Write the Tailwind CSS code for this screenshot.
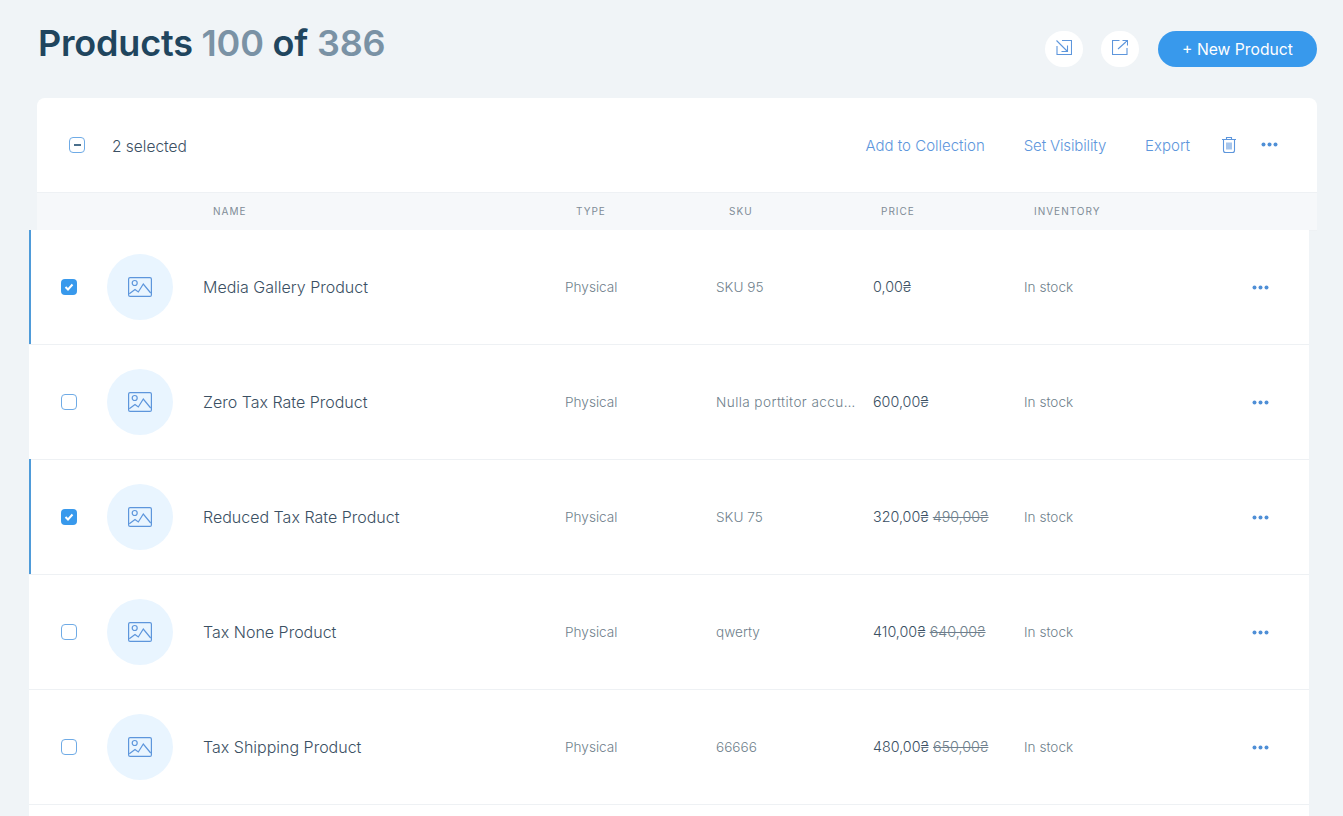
<!DOCTYPE html>
<html>
<head>
<meta charset="utf-8">
<script src="https://cdn.jsdelivr.net/npm/@tailwindcss/browser@4"></script>
</head>
<body class="bg-[#f0f4f7] h-[816px] overflow-hidden font-['Inter',sans-serif]">
<div class="h-[816px] overflow-hidden">
  <header class="flex justify-between h-[98px] pl-[38px] pr-[26px]">
    <h1 class="mt-[21px] h-[44px] text-[36px] leading-[44px] font-semibold text-[#20455e] tracking-[-0.2px]">Products <span class="text-[#7a92a5]">100</span> of <span class="text-[#7a92a5]">386</span></h1>
    <div class="flex items-start gap-[18px] pt-[31px]">
      <button class="w-[38px] h-[36px] rounded-full bg-white flex items-center justify-center">
        <svg class="mb-[3px]" width="16" height="15" viewBox="0 0 16 15" fill="none" stroke="#5d96dc" stroke-width="1.100"><path d="M1 6v8.500h14.500V.5H6"/><path d="M.5.500L11.500 11.500M11.500 5.500v6h-6"/></svg>
      </button>
      <button class="w-[38px] h-[36px] rounded-full bg-white flex items-center justify-center">
        <svg class="mb-[3px]" width="16" height="15" viewBox="0 0 16 15" fill="none" stroke="#5d96dc" stroke-width="1.100"><path d="M7.500 .5h-7v14h14.500V8"/><path d="M6 9L15.500 .5M10.500 .5h5V5.500"/></svg>
      </button>
      <button class="ml-[1px] w-[159px] h-[36px] rounded-full bg-[#3899ec] text-white text-[15.700px] leading-[37px] text-center">+ New Product</button>
    </div>
  </header>

  <section class="ml-[37px] w-[1280px] bg-white rounded-t-[8px]">
    <div class="h-[95px] flex items-center pl-[32px] pr-[39px] border-b border-[#eef1f4]">
      <span class="w-[16px] h-[16px] rounded-[4px] border border-[#6fabe6] flex items-center justify-center"><span class="w-[7px] h-[2px] bg-[#4a6f8c]"></span></span>
      <span class="ml-[27px] pt-[4px] text-[15.500px] font-light text-[#3b5063]">2 selected</span>
      <div class="ml-auto flex items-center text-[15px] text-[#5d96dc] font-light">
        <span class="pt-[3px]">Add to Collection</span>
        <span class="pt-[3px] ml-[39px] tracking-[-0.15px]">Set Visibility</span>
        <span class="pt-[3px] ml-[39px]">Export</span>
        <svg class="ml-[31px]" width="16" height="18" viewBox="0 0 16 18" fill="none" stroke="#5d96dc" stroke-width="1.100"><path d="M1 3.500h14M5.500 3.500v-2h5v2M2.500 3.500v11a2 2 0 0 0 2 2h7a2 2 0 0 0 2-2v-11M6 6.500v7M8 6.500v7M10 6.500v7"/></svg>
        <svg class="ml-[24px] mb-[2px]" width="17" height="5" viewBox="0 0 17 5" fill="#4f8fd6"><circle cx="2.500" cy="2.500" r="2"/><circle cx="8.500" cy="2.500" r="2"/><circle cx="14.500" cy="2.500" r="2"/></svg>
      </div>
    </div>
    <div class="h-[38px] bg-[#f6f8fa] flex items-center text-[10px] tracking-[1px] text-[#7f8c97] uppercase border-b border-[#eef1f4]">
      <span class="ml-[176px] w-[363px]">Name</span>
      <span class="w-[153px]">Type</span>
      <span class="w-[152px]">SKU</span>
      <span class="w-[153px]">Price</span>
      <span>Inventory</span>
    </div>
  </section>

  <main class="ml-[29px] w-[1280px] bg-white">
    <div class="h-[115px] flex items-center border-b border-[#eef1f4] relative -mt-px">
      <span class="absolute left-0 top-0 bottom-0 w-[2px] bg-[#4f9bd9]"></span>
      <span class="ml-[32px] w-[16px] h-[16px] rounded-[4px] bg-[#3899ec] flex items-center justify-center"><svg width="10" height="8" viewBox="0 0 10 8" fill="none" stroke="#fff" stroke-width="2"><path d="M1.500 4l2.500 2.500 4.500-5"/></svg></span>
      <span class="ml-[30px] w-[66px] h-[66px] rounded-full bg-[#e9f5ff] flex items-center justify-center"><svg width="24" height="20" viewBox="0 0 24 20" fill="none" stroke="#5d96dc" stroke-width="1.200"><rect x="0.600" y="0.600" width="22.800" height="18.800" rx="1.500"/><circle cx="6.700" cy="6" r="2.500"/><path d="M1.300 16.700L7 12.500l3.300 2.500 5-8 7.400 9"/></svg></span>
      <span class="ml-[30px] w-[362px] text-[16px] font-light text-[#3b5063]">Media Gallery Product</span>
      <span class="w-[151px] text-[13.600px] font-light text-[#6f7f8c]">Physical</span>
      <span class="w-[157px] text-[13.600px] font-light text-[#6f7f8c]"><span class="block w-[141px] truncate">SKU 95</span></span>
      <span class="w-[151px] text-[14.300px] font-light text-[#3b5063]">0,00₴</span>
      <span class="w-[228px] text-[13.600px] font-light text-[#6f7f8c]">In stock</span>
      <svg width="17" height="5" viewBox="0 0 17 5" fill="#4f8fd6"><circle cx="2.500" cy="2.500" r="2"/><circle cx="8.500" cy="2.500" r="2"/><circle cx="14.500" cy="2.500" r="2"/></svg>
    </div>
    <div class="h-[115px] flex items-center border-b border-[#eef1f4] relative">
      <span class="ml-[32px] w-[16px] h-[16px] rounded-[4px] border border-[#6fabe6]"></span>
      <span class="ml-[30px] w-[66px] h-[66px] rounded-full bg-[#e9f5ff] flex items-center justify-center"><svg width="24" height="20" viewBox="0 0 24 20" fill="none" stroke="#5d96dc" stroke-width="1.200"><rect x="0.600" y="0.600" width="22.800" height="18.800" rx="1.500"/><circle cx="6.700" cy="6" r="2.500"/><path d="M1.300 16.700L7 12.500l3.300 2.500 5-8 7.400 9"/></svg></span>
      <span class="ml-[30px] w-[362px] text-[16px] font-light text-[#3b5063]">Zero Tax Rate Product</span>
      <span class="w-[151px] text-[13.600px] font-light text-[#6f7f8c]">Physical</span>
      <span class="w-[157px] text-[13.600px] font-light text-[#6f7f8c]"><span class="block w-[141px] truncate tracking-[0.4px]">Nulla porttitor accumsan</span></span>
      <span class="w-[151px] text-[14.300px] font-light text-[#3b5063]">600,00₴</span>
      <span class="w-[228px] text-[13.600px] font-light text-[#6f7f8c]">In stock</span>
      <svg width="17" height="5" viewBox="0 0 17 5" fill="#4f8fd6"><circle cx="2.500" cy="2.500" r="2"/><circle cx="8.500" cy="2.500" r="2"/><circle cx="14.500" cy="2.500" r="2"/></svg>
    </div>
    <div class="h-[115px] flex items-center border-b border-[#eef1f4] relative">
      <span class="absolute left-0 -top-px bottom-0 w-[2px] bg-[#4f9bd9]"></span>
      <span class="ml-[32px] w-[16px] h-[16px] rounded-[4px] bg-[#3899ec] flex items-center justify-center"><svg width="10" height="8" viewBox="0 0 10 8" fill="none" stroke="#fff" stroke-width="2"><path d="M1.500 4l2.500 2.500 4.500-5"/></svg></span>
      <span class="ml-[30px] w-[66px] h-[66px] rounded-full bg-[#e9f5ff] flex items-center justify-center"><svg width="24" height="20" viewBox="0 0 24 20" fill="none" stroke="#5d96dc" stroke-width="1.200"><rect x="0.600" y="0.600" width="22.800" height="18.800" rx="1.500"/><circle cx="6.700" cy="6" r="2.500"/><path d="M1.300 16.700L7 12.500l3.300 2.500 5-8 7.400 9"/></svg></span>
      <span class="ml-[30px] w-[362px] text-[16px] font-light text-[#3b5063]">Reduced Tax Rate Product</span>
      <span class="w-[151px] text-[13.600px] font-light text-[#6f7f8c]">Physical</span>
      <span class="w-[157px] text-[13.600px] font-light text-[#6f7f8c]"><span class="block w-[141px] truncate">SKU 75</span></span>
      <span class="w-[151px] text-[14.300px] font-light text-[#3b5063]">320,00₴ <s class="text-[#6f7f8c]">490,00₴</s></span>
      <span class="w-[228px] text-[13.600px] font-light text-[#6f7f8c]">In stock</span>
      <svg width="17" height="5" viewBox="0 0 17 5" fill="#4f8fd6"><circle cx="2.500" cy="2.500" r="2"/><circle cx="8.500" cy="2.500" r="2"/><circle cx="14.500" cy="2.500" r="2"/></svg>
    </div>
    <div class="h-[115px] flex items-center border-b border-[#eef1f4] relative">
      <span class="ml-[32px] w-[16px] h-[16px] rounded-[4px] border border-[#6fabe6]"></span>
      <span class="ml-[30px] w-[66px] h-[66px] rounded-full bg-[#e9f5ff] flex items-center justify-center"><svg width="24" height="20" viewBox="0 0 24 20" fill="none" stroke="#5d96dc" stroke-width="1.200"><rect x="0.600" y="0.600" width="22.800" height="18.800" rx="1.500"/><circle cx="6.700" cy="6" r="2.500"/><path d="M1.300 16.700L7 12.500l3.300 2.500 5-8 7.400 9"/></svg></span>
      <span class="ml-[30px] w-[362px] text-[16px] font-light text-[#3b5063]">Tax None Product</span>
      <span class="w-[151px] text-[13.600px] font-light text-[#6f7f8c]">Physical</span>
      <span class="w-[157px] text-[13.600px] font-light text-[#6f7f8c]"><span class="block w-[141px] truncate">qwerty</span></span>
      <span class="w-[151px] text-[14.300px] font-light text-[#3b5063]">410,00₴ <s class="text-[#6f7f8c]">640,00₴</s></span>
      <span class="w-[228px] text-[13.600px] font-light text-[#6f7f8c]">In stock</span>
      <svg width="17" height="5" viewBox="0 0 17 5" fill="#4f8fd6"><circle cx="2.500" cy="2.500" r="2"/><circle cx="8.500" cy="2.500" r="2"/><circle cx="14.500" cy="2.500" r="2"/></svg>
    </div>
    <div class="h-[115px] flex items-center border-b border-[#eef1f4] relative">
      <span class="ml-[32px] w-[16px] h-[16px] rounded-[4px] border border-[#6fabe6]"></span>
      <span class="ml-[30px] w-[66px] h-[66px] rounded-full bg-[#e9f5ff] flex items-center justify-center"><svg width="24" height="20" viewBox="0 0 24 20" fill="none" stroke="#5d96dc" stroke-width="1.200"><rect x="0.600" y="0.600" width="22.800" height="18.800" rx="1.500"/><circle cx="6.700" cy="6" r="2.500"/><path d="M1.300 16.700L7 12.500l3.300 2.500 5-8 7.400 9"/></svg></span>
      <span class="ml-[30px] w-[362px] text-[16px] font-light text-[#3b5063]">Tax Shipping Product</span>
      <span class="w-[151px] text-[13.600px] font-light text-[#6f7f8c]">Physical</span>
      <span class="w-[157px] text-[13.600px] font-light text-[#6f7f8c]"><span class="block w-[141px] truncate">66666</span></span>
      <span class="w-[151px] text-[14.300px] font-light text-[#3b5063]">480,00₴ <s class="text-[#6f7f8c]">650,00₴</s></span>
      <span class="w-[228px] text-[13.600px] font-light text-[#6f7f8c]">In stock</span>
      <svg width="17" height="5" viewBox="0 0 17 5" fill="#4f8fd6"><circle cx="2.500" cy="2.500" r="2"/><circle cx="8.500" cy="2.500" r="2"/><circle cx="14.500" cy="2.500" r="2"/></svg>
    </div>
    <div class="h-[115px]"></div>
  </main>
</div>
</body>
</html>
